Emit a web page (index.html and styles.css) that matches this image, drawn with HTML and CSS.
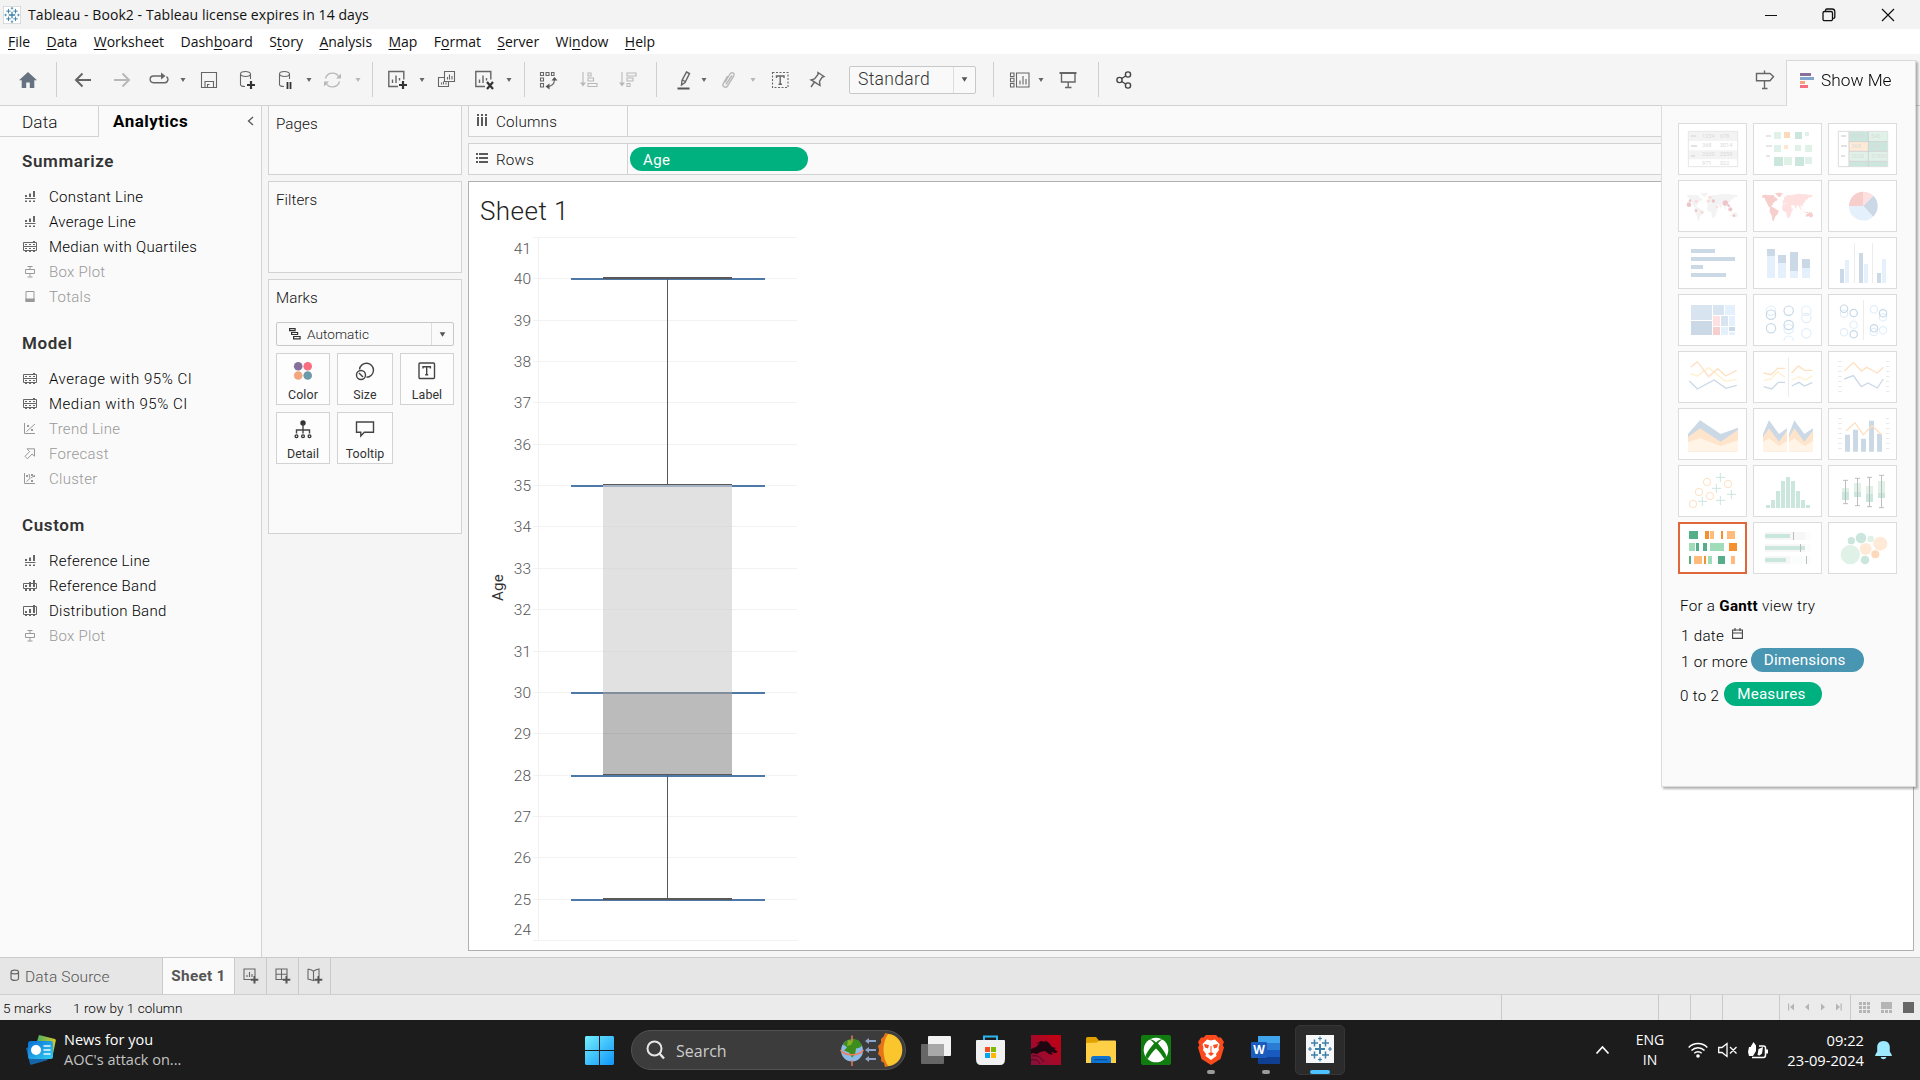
FILE: index.html
```html
<!DOCTYPE html>
<html lang="en">
<head>
<meta charset="utf-8">
<title>Tableau - Book2</title>
<link rel="stylesheet" href="styles.css">
</head>
<body>
<svg class="defs" width="0" height="0">
  <symbol id="caret" viewBox="0 0 8 6"><path d="M1.500 1h5L4 5z" fill="currentColor"/></symbol>
  <symbol id="s-line" viewBox="0 0 14 12"><path d="M2 4h2v2H2zM6 2.500h2v3.500H6zM10 0h2v6h-2zM2 7h10.500v1H2zM2 9.500h2v1.500H2zM6 9.500h2v1.500H6zM10 9.500h2v1.500h-2z" fill="currentColor"/></symbol>
  <symbol id="s-quart" viewBox="0 0 14 12"><path d="M.5 1.500h13v4H.5zM.5 5.500h13v4H.5z" fill="none" stroke="currentColor"/><path d="M2 3h2v1H2zM6 3h2v1H6zM10 3h2v1h-2zM2 7h2v1H2zM6 7h2v1H6zM10 7h2v1h-2zM10 0h2v2h-2zM2 9h2v2H2zM6 9h2v2H6zM10 9h2v2h-2z" fill="currentColor"/></symbol>
  <symbol id="s-band" viewBox="0 0 14 12"><path d="M.5 3.500h13v5H.5z" fill="none" stroke="currentColor"/><path d="M2 5h2v2H2zM6 2h2v5H6zM10 0h2v7h-2zM2 8.500h2v2.500H2zM6 8.500h2v2.500H6zM10 8.500h2v2.500h-2z" fill="currentColor"/></symbol>
  <symbol id="s-dist" viewBox="0 0 14 12"><path d="M.5 1.500h13v8H.5z" fill="none" stroke="currentColor"/><path d="M2 6h2v2H2zM6 4h2v4H6zM10 0h2v8h-2zM2 9h2v2H2zM6 9h2v2H6zM10 9h2v2h-2z" fill="currentColor"/></symbol>
  <symbol id="s-box" viewBox="0 0 14 12"><path d="M4.500.5h5M7 .5v3M2.500 3.500h9v4h-9zM7 7.500v3M4.500 11h5" fill="none" stroke="currentColor"/></symbol>
  <symbol id="s-total" viewBox="0 0 14 12"><path d="M3 .5h8v10H3z" fill="none" stroke="currentColor"/><path d="M2.500 7.500h9V11h-9z" fill="currentColor"/></symbol>
  <symbol id="s-trend" viewBox="0 0 14 12"><path d="M1.500 0v10.500H12M3.500 8.500L12 1" fill="none" stroke="currentColor"/><path d="M4 2h2v2H4zM8 6h2v2H8z" fill="currentColor"/></symbol>
  <symbol id="s-fore" viewBox="0 0 14 12"><path d="M4 .8h7.500v7.400L9 6 4.500 10.800 2 8.300 6.600 3.600z" fill="none" stroke="currentColor"/></symbol>
  <symbol id="s-clus" viewBox="0 0 14 12"><path d="M1.500 0v10.500H12M3.500 8.500L7 5.500 6 1M8 5l4-3" fill="none" stroke="currentColor"/><path d="M3 2h2v2H3zM8 1h2v2H8zM8 7h2v2H8zM10 3h2v1h-2z" fill="currentColor"/></symbol>
  <symbol id="tableau" viewBox="0 0 28 28"><g stroke="#3f80a8" fill="none"><path d="M14 9v10M9 14h10" stroke-width="2"/><path d="M8.500 4.500v7M5 8h7M19.500 4.500v7M16 8h7M8.500 16.500v7M5 20h7M19.500 16.500v7M16 20h7" stroke-width="1.500"/><path d="M14 1.500v4M12 3.500h4M14 22.500v4M12 24.500h4M4 12v4M2 14h4M24 12v4M22 14h4" stroke-width="1.200"/></g></symbol>
  <symbol id="map" viewBox="0 0 207 156"><path d="M27 47l8-3 14 2 10-1 6 3-3 6 7-2 5 8-8 4-7 7-1 5-4 1 3 6 5 4-3 1-9-6-4-5-5-10-4-6-1-6-8-3zM66 40l12-2 14 1-10 11-5 1-6-7zM51 84l9-2 8 5 9 6-4 10-6 6-5 13-4-1-2-15-6-10zM89 62l5-4-1-6 12-8 8 2 22-5 14 1 31 4-3 4-11 3-2 5-5 1-4 8-6 6 2 5-3 1-4-4-2 4 4 9-3 1-6-12-5-1-4 11-5-11-10 0 4 6-5 3-8-13-9-2-6 3zM90 73l14-1 7 3 4 10 6 2-6 9-1 9-6 9-5-1-4-17-9-2-3-9zM158 105l8-5 4-4 2 3 3-3 5 10-3 6-7-1-3-3-8 2zM150 89l7 6 9 2-2 2-10-3z"/></symbol>
</svg>

<header class="titlebar">
  <svg class="app-ico" width="18" height="18" viewBox="0 0 28 28"><rect width="28" height="28" fill="#fff" stroke="#c9c9c9" stroke-width="2"/><use href="#tableau"/></svg>
  <span class="title">Tableau - Book2 - Tableau license expires in 14 days</span>
  <div class="winbtns">
    <svg width="12" height="14" viewBox="0 0 12 14"><path d="M0 7.500h12" stroke="#111"/></svg>
    <svg width="14" height="14" viewBox="0 0 14 14"><path d="M3.500 3.500V2.200A1.500 1.500 0 0 1 4.800 1H10a2.800 2.800 0 0 1 2.800 2.800V9a1.500 1.500 0 0 1-1.500 1.500M1 5a1.500 1.500 0 0 1 1.500-1.500H9A1.500 1.500 0 0 1 10.500 5v6.200A1.500 1.500 0 0 1 9 12.700H2.500A1.500 1.500 0 0 1 1 11.200z" fill="none" stroke="#111" stroke-width="1.300"/></svg>
    <svg width="14" height="14" viewBox="0 0 14 14"><path d="M1 1l12 12M13 1L1 13" stroke="#111" stroke-width="1.200"/></svg>
  </div>
</header>

<nav class="menubar">
  <span><u>F</u>ile</span><span><u>D</u>ata</span><span><u>W</u>orksheet</span><span>Dash<u>b</u>oard</span><span>S<u>t</u>ory</span><span><u>A</u>nalysis</span><span><u>M</u>ap</span><span>F<u>o</u>rmat</span><span><u>S</u>erver</span><span>Wi<u>n</u>dow</span><span><u>H</u>elp</span>
</nav>

<div class="toolbar">
  <svg width="20" height="20" viewBox="0 0 20 20"><path d="M10 2l9 8.300h-2.700V18h-4.500v-5.500H8.200V18H3.700v-7.700H1z" fill="#66727f"/></svg>
  <i class="sep"></i>
  <svg width="20" height="20" viewBox="0 0 20 20"><path d="M18 10H3M9.500 3.500L3 10l6.500 6.500" class="k2"/></svg>
  <svg class="off" width="20" height="20" viewBox="0 0 20 20"><path d="M2 10h15M10.500 3.500L17 10l-6.500 6.500" class="k2"/></svg>
  <svg width="20" height="20" viewBox="0 0 20 20"><path d="M14 6H4.500a3.300 3.300 0 0 0 0 6.700h11.500a3.300 3.300 0 0 0 1.500-6" class="k15"/><path d="M12 2.500l4.500 3.500L12 9.500z" fill="#666"/></svg>
  <svg class="car" width="8" height="6"><use href="#caret"/></svg>
  <svg width="20" height="20" viewBox="0 0 20 20"><path d="M2.500 2.500h15v15h-15zM6 17.500v-6h8.500v6M8.500 17.500v-3h2" class="k"/></svg>
  <svg width="20" height="20" viewBox="0 0 20 20"><ellipse cx="7.500" cy="4" rx="5" ry="2.500" class="k"/><path d="M2.500 4v10.500c0 1 2 2 4.500 2M12.500 4v5" class="k"/><path d="M13 11v8M9 15h8" stroke="#333" stroke-width="2.200"/></svg>
  <svg width="20" height="20" viewBox="0 0 20 20"><ellipse cx="9.500" cy="4" rx="5" ry="2.500" class="k"/><path d="M4.500 4v10.500c0 1 2 2 4.500 2M14.500 4v5" class="k"/><path d="M12.500 12v7M15.500 12v7" stroke="#333" stroke-width="1.800"/></svg>
  <svg class="car" width="8" height="6"><use href="#caret"/></svg>
  <svg class="off" width="20" height="20" viewBox="0 0 20 20"><path d="M2.500 8.500a7.300 7.300 0 0 1 13.500-1.500M16.500 11.500A7.300 7.300 0 0 1 3 13" class="k15"/><path d="M18 3.500v5h-5zM1 16.500v-5h5z" fill="#b8b8b8"/></svg>
  <svg class="car offc" width="8" height="6"><use href="#caret"/></svg>
  <i class="sep"></i>
  <svg width="20" height="20" viewBox="0 0 20 20"><path d="M10 16.500H.8V1.500h15v8M4.500 13V9.500M8 13V5.500M11.500 10.500V8" class="k15"/><path d="M15 11v8M11 15h8" stroke="#333" stroke-width="2.200"/></svg>
  <svg class="car" width="8" height="6"><use href="#caret"/></svg>
  <svg width="20" height="20" viewBox="0 0 20 20"><path d="M7.500 1.500h10v10h-10zM7 7.500H1.500v9h10v-4.500M10.500 9.500V7M12.500 9.500v-5M15 9.500V6M4.500 14.500v-2M6.500 14.500v-3M9 14.500v-2" class="k"/></svg>
  <svg width="20" height="20" viewBox="0 0 20 20"><path d="M10 16.500H.8V1.500h15v8M4.500 13V9.500M8 13V5.500M11.500 10.500V8" class="k15"/><path d="M12 12l6 7M18 12l-6 7" stroke="#333" stroke-width="2.200"/></svg>
  <svg class="car" width="8" height="6"><use href="#caret"/></svg>
  <i class="sep"></i>
  <svg width="20" height="20" viewBox="0 0 20 20"><path d="M1.500 2.500h3v3h-3zM7 2.500h3v3H7zM12.500 2.500h2.500v3h-2.500zM1.500 8h3v3h-3zM1.500 13.500h3V17h-3zM8 16.500c5 0 7.500-2.500 7.500-7.500" class="k"/><path d="M12.500 10.500l3-3.500 3 3.500zM10.500 13.500l-4 3 4 3z" fill="#555"/></svg>
  <svg class="off" width="20" height="20" viewBox="0 0 20 20"><path d="M4 2v12M9 3h3v3H9zM9 8h5.500v3H9zM9 13.500h9v3H9z" class="k"/><path d="M1 12.500h6l-3 4z" fill="#b8b8b8"/></svg>
  <svg class="off" width="20" height="20" viewBox="0 0 20 20"><path d="M4 2v12M9 3h9v3H9zM9 8h6v3H9zM9 13.500h3v3H9z" class="k"/><path d="M1 12.500h6l-3 4z" fill="#b8b8b8"/></svg>
  <i class="sep"></i>
  <svg width="20" height="20" viewBox="0 0 20 20"><path d="M12.500 2l3 1.500-4.500 9-3.500 2.500.5-4.500zM8.500 10l2.500 1.500" class="k15"/><path d="M3.500 17.500h12v2h-12z" fill="#555"/></svg>
  <svg class="car" width="8" height="6"><use href="#caret"/></svg>
  <svg class="off" width="20" height="20" viewBox="0 0 20 20"><path d="M6 12.500l5-8.500c1.500-2.500 5-.8 3.800 1.800L8.500 16c-1.800 2.500-5.500.8-4.300-2.200L8.500 6M7 14.500l6-9" class="k15"/></svg>
  <svg class="car offc" width="8" height="6"><use href="#caret"/></svg>
  <svg width="20" height="20" viewBox="0 0 20 20"><path d="M1.500 2.500h15.500v15H1.500z" class="k" stroke-dasharray="2 1.500"/><path d="M5.500 8V6h7.500v2M9.200 6v8M7.500 14.200h3.500" class="k15"/></svg>
  <svg width="20" height="20" viewBox="0 0 20 20"><path d="M10 2.500l6 4-2 .8-2.500 4.200.5 4-3-1.800-3-2-3-1.800 3.500-1L10 4.500zM6.500 12L3 17" class="k15"/></svg>
  <div class="fit"><span>Standard</span><b><svg width="9" height="7"><use href="#caret"/></svg></b></div>
  <i class="sep"></i>
  <svg width="22" height="20" viewBox="0 0 22 20"><path d="M2.500 3h3.500v3.500H2.500zM2.500 8.300h3.500v3.500H2.500zM2.500 13.500h3.500V17H2.500zM8.500 3h12.500v14H8.500zM12 14.500v-4M15 14.500V6M18 14.500V9" class="k"/></svg>
  <svg class="car" width="8" height="6"><use href="#caret"/></svg>
  <svg width="20" height="20" viewBox="0 0 20 20"><path d="M1.500 3h17" class="k2"/><path d="M3.500 3v9h13.500V3M10.200 12v5.500M7 17.500h6.500" class="k15"/></svg>
  <i class="sep"></i>
  <svg width="20" height="20" viewBox="0 0 20 20"><g class="k15 d"><circle cx="4.500" cy="10" r="2.600"/><circle cx="13" cy="4.500" r="2.600"/><circle cx="13" cy="15.500" r="2.600"/><path d="M6.700 8.500L10.700 6M6.700 11.500l4 2.500"/></g></svg>
  <svg width="20" height="20" viewBox="0 0 20 20"><path d="M1.500 3.500H15l3.500 3-3.500 4.300H1.500zM9.500.5v3M9.500 11v7.500M7 18.500h5.500" class="k15"/></svg>
</div>

<main class="work">
  <aside class="side">
    <div class="tabs"><span class="tab-data">Data</span><span class="tab-an">Analytics</span><svg width="7" height="10" viewBox="0 0 7 10"><path d="M6 1L1.500 5 6 9" fill="none" stroke="#555" stroke-width="1.300"/></svg></div>
    <h3>Summarize</h3>
    <ul>
      <li><svg width="14" height="12"><use href="#s-line"/></svg>Constant Line</li>
      <li><svg width="14" height="12"><use href="#s-line"/></svg>Average Line</li>
      <li><svg width="14" height="12"><use href="#s-quart"/></svg>Median with Quartiles</li>
      <li class="dis"><svg width="14" height="12"><use href="#s-box"/></svg>Box Plot</li>
      <li class="dis"><svg width="14" height="12"><use href="#s-total"/></svg>Totals</li>
    </ul>
    <h3>Model</h3>
    <ul>
      <li class="ci"><svg width="14" height="12"><use href="#s-quart"/></svg>Average with 95% CI</li>
      <li class="ci"><svg width="14" height="12"><use href="#s-quart"/></svg>Median with 95% CI</li>
      <li class="dis"><svg width="14" height="12"><use href="#s-trend"/></svg>Trend Line</li>
      <li class="dis"><svg width="14" height="12"><use href="#s-fore"/></svg>Forecast</li>
      <li class="dis"><svg width="14" height="12"><use href="#s-clus"/></svg>Cluster</li>
    </ul>
    <h3>Custom</h3>
    <ul>
      <li><svg width="14" height="12"><use href="#s-line"/></svg>Reference Line</li>
      <li><svg width="14" height="12"><use href="#s-band"/></svg>Reference Band</li>
      <li><svg width="14" height="12"><use href="#s-dist"/></svg>Distribution Band</li>
      <li class="dis"><svg width="14" height="12"><use href="#s-box"/></svg>Box Plot</li>
    </ul>
  </aside>

  <section class="cards">
    <div class="card pages">Pages</div>
    <div class="card filters">Filters</div>
    <div class="card marks">Marks
      <div class="mtype"><svg width="12" height="12" viewBox="0 0 12 12"><path d="M.6.700h5.500v2H.6zM2.600 4.500h6v2h-6zM4.600 8.500h6.500v2.300H4.600z" fill="none" stroke="#333" stroke-width="1.200"/></svg><span>Automatic</span><b><svg width="9" height="7"><use href="#caret"/></svg></b></div>
      <div class="mgrid">
        <div><svg width="20" height="20" viewBox="0 0 20 20"><circle cx="5.200" cy="5.200" r="4.300" fill="#86709a"/><circle cx="14.700" cy="5.200" r="4.300" fill="#f96d80"/><circle cx="5.200" cy="14.500" r="4.300" fill="#f3a67e"/><circle cx="14.700" cy="14.500" r="4.300" fill="#6d9aa8"/></svg>Color</div>
        <div><svg width="20" height="20" viewBox="0 0 20 20"><path d="M4.500 8.500a7 7 0 1 1 7 7.700" class="k15 d"/><circle cx="6" cy="14" r="4.500" class="k15 d"/><path d="M4 12l4 4" class="k15 d"/></svg>Size</div>
        <div><svg width="20" height="20" viewBox="0 0 20 20"><rect x="2" y="2" width="15.500" height="15.500" rx="1" class="k15 d"/><path d="M6 7.500V5.700h7.400v1.800M9.700 5.700v8M8.200 13.700h3" class="k15 d"/></svg>Label</div>
        <div><svg width="20" height="20" viewBox="0 0 20 20"><circle cx="10" cy="3" r="2.700" fill="#333"/><path d="M10 3.500v10M3.500 13.500V10h13v3.500" class="k15 d"/><g fill="none" stroke="#333" stroke-width="1.300"><circle cx="3.500" cy="16.200" r="1.400"/><circle cx="10" cy="16.200" r="1.400"/><circle cx="16.500" cy="16.200" r="1.400"/></g></svg>Detail</div>
        <div><svg width="20" height="20" viewBox="0 0 20 20"><path d="M1.500 2H18.500v10.200H9.300L5.800 16v-3.800H1.500z" class="k15 d"/></svg>Tooltip</div>
      </div>
    </div>
  </section>

  <section class="canvas">
    <div class="shelf"><span class="sh-name"><svg width="12" height="12" viewBox="0 0 12 12"><path d="M1 0h2v2H1zM5 0h2v2H5zM9 0h2v2H9zM1 3h2v9H1zM5 3h2v9H5zM9 3h2v9H9z" fill="#5a5a5a"/></svg>Columns</span></div>
    <div class="shelf"><span class="sh-name"><svg width="12" height="12" viewBox="0 0 12 12"><path d="M0 1h2v2H0zM0 5h2v2H0zM0 9h2v2H0zM3 1h9v2H3zM3 5h9v2H3zM3 9h9v2H3z" fill="#5a5a5a"/></svg>Rows</span><span class="pill age">Age</span></div>
    <div class="view">
      <svg width="1444" height="768" viewBox="469 182 1444 768">
        <text x="480" y="220" class="vtitle">Sheet 1</text>
        <path class="gridl" d="M533 237.500H797M533 278.500H797M533 320.500H797M533 361.500H797M533 402.500H797M533 444.500H797M533 485.500H797M533 526.500H797M533 568.500H797M533 609.500H797M533 651.500H797M533 692.500H797M533 733.500H797M533 775.500H797M533 816.500H797M533 857.500H797M533 899.500H797M533 940.500H798M538.500 237V941"/>
        <g class="ax" text-anchor="end">
          <text x="531" y="254">41</text><text x="531" y="284">40</text><text x="531" y="326">39</text><text x="531" y="367">38</text><text x="531" y="408">37</text><text x="531" y="450">36</text><text x="531" y="491">35</text><text x="531" y="532">34</text><text x="531" y="574">33</text><text x="531" y="615">32</text><text x="531" y="657">31</text><text x="531" y="698">30</text><text x="531" y="739">29</text><text x="531" y="781">28</text><text x="531" y="822">27</text><text x="531" y="863">26</text><text x="531" y="905">25</text><text x="531" y="935">24</text>
        </g>
        <text transform="translate(502.500 601) rotate(-90)" class="axt">Age</text>
        <g shape-rendering="crispEdges">
          <rect x="603" y="485" width="129" height="207" fill="#e1e1e1"/>
          <rect x="603" y="692" width="129" height="83" fill="#bbb"/>
          <path d="M603 526.500H732M603 568.500H732M603 609.500H732M603 651.500H732" stroke="#dcdcdc"/><path d="M603 733.500H732" stroke="#b2b2b2"/>
          <path d="M571 279H765M571 486H603M732 486H765M571 693H603M732 693H765M571 776H765M571 900H765" stroke="#4e79a7" stroke-width="2"/>
          <path d="M603 486H732" stroke="#a6b3c4" stroke-width="2"/><path d="M603 693H732" stroke="#828d9d" stroke-width="2"/>
          <path d="M603 278H732M603 899H732" stroke="#595959" stroke-width="2"/>
          <path d="M603 484.500H732M603 774.500H732M667.500 279V484M667.500 775V898" stroke="#595959"/>
        </g>
      </svg>
    </div>
  </section>
</main>

<section class="showme">
  <div class="sm-tab"><svg width="14" height="16" viewBox="0 0 14 16"><path d="M0 1h11v3H0z" fill="#86709a"/><path d="M0 5h14v3H0z" fill="#82a5cc"/><path d="M0 9h5v3H0z" fill="#f3a67e"/><path d="M0 13h8v3H0z" fill="#f96d80"/></svg>Show Me</div>
  <div class="sm-body">
    <div class="thumbs">
      <svg viewBox="0 0 207 156"><path d="M31 25h148v106H31z" fill="#fff" stroke="#e6e6e6" stroke-width="3"/><path d="M33 27h144v27H33zM33 82h144v27H33z" fill="#f3f3f3"/><path d="M39 36h15v6H39zM39 66h18v6H39zM39 96h12v6H39z" fill="#e2e2e2"/><g class="tt"><text x="72" y="46">1234</text><text x="125" y="46">678</text><text x="72" y="73">368</text><text x="125" y="73">3014</text><text x="72" y="100">2620</text><text x="125" y="100">2559</text><text x="72" y="125">971</text><text x="125" y="125">322</text></g></svg>
      <svg viewBox="0 0 207 156"><path d="M39 36h15v6H39zM39 66h18v6H39zM39 96h12v6H39z" fill="#e6e6e6"/><path d="M63 27h21v21H63zM156 27h12v12h-12zM63 66h21v21H63zM126 66h18v18h-18zM156 66h21v21h-21zM93 102h24v24H93zM156 102h21v21h-21z" fill="#e0f2e8"/><path d="M126 27h21v21h-21zM63 102h27v27H63zM126 102h27v27h-27z" fill="#cbe6dc"/><path d="M93 27h18v18H93z" fill="#fcd9ba"/><path d="M93 66h12v12H93z" fill="#fee6cf"/></svg>
      <svg viewBox="0 0 207 156"><path d="M31 25h148v106H31z" fill="#fff" stroke="#dcdcdc" stroke-width="3"/><path d="M39 36h15v6H39zM39 66h18v6H39zM39 96h12v6H39z" fill="#e2e2e2"/><path d="M64 27h57v28H64zM122 57h56v27h-56zM64 117h57v13H64zM122 117h56v13h-56z" fill="#cbe6dc"/><path d="M122 27h56v28h-56zM64 86h57v28H64zM122 86h56v28h-56z" fill="#e0f2e8"/><path d="M64 57h57v27H64z" fill="#feead6"/><path d="M63 56h115M63 85h115M63 115h115M121 26v105M63 26v105" stroke="#d0d0d0" stroke-width="3"/><g class="tt"><text x="70" y="46">1234</text><text x="129" y="46">546</text><text x="70" y="76">368</text><text x="129" y="76">340</text><text x="70" y="106">2620</text><text x="129" y="106">51890</text></g></svg>

      <svg viewBox="0 0 207 156"><use href="#map" fill="#f3f3f3"/><g fill="#eec3c9"><circle cx="33" cy="74" r="7"/><circle cx="142" cy="69" r="8"/><circle cx="157" cy="88" r="6"/><circle cx="106" cy="63" r="5"/><circle cx="54" cy="92" r="4"/><circle cx="168" cy="107" r="4"/><circle cx="152" cy="77" r="4"/><circle cx="36" cy="62" r="4"/></g><g fill="#fbdcda"><circle cx="55" cy="64" r="5"/><circle cx="72" cy="97" r="5"/><circle cx="96" cy="52" r="5"/><circle cx="91" cy="63" r="5"/><circle cx="117" cy="81" r="4"/></g></svg>
      <svg viewBox="0 0 207 156"><svg width="207" height="156"><use href="#map" fill="#ffe0e0"/></svg><svg width="85" height="156" viewBox="0 0 85 156"><use href="#map" width="207" height="156" fill="#f6cfcd"/></svg><svg x="158" y="96" width="40" height="40" viewBox="158 96 40 40"><use href="#map" width="207" height="156" fill="#f6cfcd"/></svg></svg>
      <svg viewBox="0 0 207 156"><path d="M106 78V35a43 43 0 0 1 30 12z" fill="#ffe0e0"/><path d="M106 78L136 47a43 43 0 0 1-1 63z" fill="#cbd8e6"/><path d="M106 78l29 32A43 43 0 0 1 63 78z" fill="#e4f0fb"/><path d="M106 78H63a43 43 0 0 1 43-43z" fill="#f6cfcd"/></svg>

      <svg viewBox="0 0 207 156"><path d="M39 36h72v12H39zM39 60h132v12H39zM39 84h36v12H39zM39 108h105v12H39z" fill="#cbd8e6"/></svg>
      <svg viewBox="0 0 207 156"><path d="M42 36h24v87H42zM75 54h24v69H75zM111 45h24v78h-24zM147 66h24v57h-24z" fill="#e4f0fb"/><path d="M42 36h24v21H42zM75 54h24v24H75zM111 45h24v57h-24zM147 66h24v27h-24z" fill="#cbd8e6"/></svg>
      <svg viewBox="0 0 207 156"><path d="M79.500 18v120M133.500 18v120" stroke="#ececec" stroke-width="3"/><path d="M36 96h12v42H36zM93 48h12v90H93zM147 108h12v30h-12z" fill="#cbd8e6"/><path d="M51 69h12v69H51zM108 81h12v57h-12zM162 66h12v72h-12z" fill="#e4f0fb"/></svg>

      <svg viewBox="0 0 207 156"><path d="M39 33h63v45H39zM105 33h33v30h-33zM129 66h21v30h-21z" fill="#d8e5f1"/><path d="M39 81h63v42H39zM153 99h18v12h-18z" fill="#cbd8e6"/><path d="M141 33h30v30h-30zM153 66h18v30h-18zM129 99h21v24h-21zM153 114h18v9h-18z" fill="#e4f0fb"/><path d="M105 66h21v30h-21z" fill="#ffe0e0"/><path d="M105 99h21v24h-21z" fill="#f6cfcd"/></svg>
      <svg viewBox="0 0 207 156"><g fill="none" stroke="#e0eefa" stroke-width="3.500"><circle cx="54" cy="50" r="14"/><circle cx="160" cy="50" r="14"/><circle cx="160" cy="72" r="14"/><circle cx="107" cy="105" r="14"/><circle cx="160" cy="118" r="14"/><path d="M93 140a14 14 0 0 1 28 0"/></g><g fill="none" stroke="#c6d8e7" stroke-width="3.500"><circle cx="54" cy="62" r="14"/><circle cx="107" cy="50" r="14"/><circle cx="54" cy="103" r="14"/><circle cx="107" cy="93" r="14"/></g></svg>
      <svg viewBox="0 0 207 156"><path d="M106.500 18v120" stroke="#ececec" stroke-width="3"/><g fill="none" stroke="#e0eefa" stroke-width="3.500"><circle cx="48" cy="59" r="11"/><circle cx="77" cy="92" r="11"/><circle cx="48" cy="115" r="11"/><circle cx="138" cy="46" r="11"/><circle cx="165" cy="70" r="11"/><circle cx="165" cy="109" r="11"/><circle cx="137" cy="114" r="11"/></g><g fill="none" stroke="#c6d8e7" stroke-width="3.500"><circle cx="48" cy="44" r="11"/><circle cx="77" cy="57" r="11"/><circle cx="77" cy="121" r="11"/><circle cx="165" cy="58" r="11"/><circle cx="138" cy="103" r="11"/></g></svg>

      <svg viewBox="0 0 207 156"><g class="ln"><path stroke="#fff0cf" d="M36 68l22 7 34-25 50 41 34-6"/><path stroke="#fee0c2" d="M38 49l20-17 34 45 27-24 24 22 33-17"/><path stroke="#cbd8e6" d="M34 90l24 24 50-27 36 25 32-9"/></g></svg>
      <svg viewBox="0 0 207 156"><path d="M106.500 18v120" stroke="#ececec" stroke-width="3"/><g class="ln"><path stroke="#fff0cf" d="M32 88l22-5 20-21 22 17M116 87l22-10 20 10 20-13"/><path stroke="#fee0c2" d="M32 66l22 5 20-19h22M116 66l20-21 18 13h24"/><path stroke="#cbd8e6" d="M32 107l24 7 20-20h20M116 105l22-11 16 11 24-10"/></g></svg>
      <svg viewBox="0 0 207 156"><path d="M36 30v100M179 30v100" stroke="#e9e9e9" stroke-width="10" stroke-dasharray="3 12"/><g class="ln"><path stroke="#fee0c2" d="M49 60l27-26 24 26 16-11 32 17 18-17"/><path stroke="#cbd8e6" d="M49 84l27-10 24 33 20-11 28 15 18-27"/></g></svg>

      <svg viewBox="0 0 207 156"><path d="M30 78l36-41 62 41 52-19v72H30z" fill="#cbd8e6"/><path d="M30 87l36-26 62 40 52-36v66H30z" fill="#fee4cb"/><path d="M30 102l36-11 62 23 52-17v34H30z" fill="#fff4e6"/></svg>
      <svg viewBox="0 0 207 156"><path d="M30 78l18-41 30 41 24-17v70H30zM108 78l16-41 30 41 26-17v70h-72z" fill="#cbd8e6"/><path d="M30 87l18-26 30 40 24-34v64H30zM108 87l16-26 30 40 26-34v64h-72z" fill="#fee4cb"/><path d="M30 102l18-11 30 23 24-15v32H30zM108 102l16-11 30 23 26-15v32h-72z" fill="#fff4e6"/></svg>
      <svg viewBox="0 0 207 156"><path d="M36 30v100M179 30v100" stroke="#e9e9e9" stroke-width="10" stroke-dasharray="3 12"/><path d="M51 80h15v51H51zM75 65h15v66H75zM99 92h15v39H99zM123 38h15v93h-15zM147 77h15v54h-15z" fill="#cbd8e6"/><path class="ln" stroke="#fee0c2" d="M54 69l27-25 25 36 26-27 29 27"/></svg>

      <svg viewBox="0 0 207 156"><g fill="none" stroke="#fee0c2" stroke-width="3"><circle cx="87" cy="51" r="11"/><circle cx="150" cy="57" r="11"/><circle cx="63" cy="81" r="11"/><circle cx="96" cy="93" r="11"/><circle cx="45" cy="117" r="11"/></g><path d="M127 24v27M114 37h27M115 57v27M102 70h27M160 75v27M147 88h27M127 93v27M114 106h27M73 96v27M60 109h27" stroke="#cbe6dc" stroke-width="3"/></svg>
      <svg viewBox="0 0 207 156"><path d="M39 120h12v9H39zM54 105h12v24H54zM69 78h12v51H69zM84 48h12v81H84zM99 36h12v93H99zM114 48h12v81h-12zM129 78h12v51h-12zM144 105h12v24h-12zM159 120h12v9h-12z" fill="#cbe6dc"/></svg>
      <svg viewBox="0 0 207 156"><path d="M42 69h21v36H42zM78 54h21v42H78zM114 63h21v48h-21zM150 48h21v51h-21z" fill="#e0f2e8"/><path d="M42 81h21v24H42zM78 81h21v15H78zM114 87h21v24h-21zM150 84h21v15h-21z" fill="#cbe6dc"/><path d="M45 46h15M52.500 46v70M45 116h15M81 40h15M88.500 40v82M81 122h15M117 37h15M124.500 37v88M117 125h15M153 31h15M160.500 31v97M153 128h15" stroke="#bdbdbd" stroke-width="3"/></svg>

      <svg class="sel" viewBox="0 0 207 156"><path d="M33 27h27v24H33zM54 63h9v24h-9zM75 63h12v24H75zM33 102h6v24h-6zM120 102h21v24h-21z" fill="#56ad8a"/><path d="M33 63h18v24H33zM96 63h42v24H96zM90 102h12v24H90z" fill="#9fdcb8"/><path d="M81 27h12v24H81zM129 27h6v24h-6zM153 63h24v24h-24zM78 102h6v24h-6z" fill="#f68f2e"/><path d="M96 27h12v24H96zM147 27h24v24h-24zM48 102h24v24H48zM159 102h12v24h-12z" fill="#febb7c"/></svg>
      <svg viewBox="0 0 207 156"><path d="M36 30h120v24H36zM36 66h120v24H36zM36 102h75v24H36z" fill="#f7f7f7"/><path d="M156 30h18v24h-18zM156 66h18v24h-18zM111 102h63v24h-63z" fill="#fbfcfc"/><path d="M36 36h75v12H36zM36 72h120v12H36zM36 108h63v12H36z" fill="#cbe6dc"/><path d="M121.500 30v24M142.500 66v24M160.500 102v24" stroke="#bdbdbd" stroke-width="3"/></svg>
      <svg viewBox="0 0 207 156"><g fill="#e0f2e8"><circle cx="67" cy="98" r="29"/><circle cx="128" cy="51" r="10"/></g><g fill="#cbe6dc"><circle cx="99" cy="48" r="16"/><circle cx="70" cy="56" r="11"/><circle cx="111" cy="114" r="13"/></g><g fill="#feead6"><circle cx="113" cy="81" r="18"/><circle cx="157" cy="65" r="21"/></g><circle cx="142" cy="97" r="12" fill="#fcd9ba"/></svg>
    </div>
    <p class="sm-for">For a <b>Gantt</b> view try</p>
    <p class="sm-date">1 date <svg width="11" height="11" viewBox="0 0 11 11"><path d="M.6 2h9.800v8.400H.6zM.6 5h9.800M3 0v3M8 0v3" fill="none" stroke="#444" stroke-width="1.100"/></svg></p>
    <p class="sm-dim"><span>1 or more</span><span class="pill dim">Dimensions</span></p>
    <p class="sm-mea"><span>0 to 2</span><span class="pill mea">Measures</span></p>
  </div>
</section>

<div class="sheets">
  <span class="ds"><svg width="10" height="14" viewBox="0 0 10 14"><path d="M1 3c0-2.500 7.500-2.500 7.500 0v6.500c0 2.500-7.500 2.500-7.500 0zM1 3.300c0 2.200 7.500 2.200 7.500 0" fill="none" stroke="#666" stroke-width="1.200"/></svg>Data Source</span>
  <span class="cur">Sheet 1</span>
  <span class="add"><svg width="16" height="16" viewBox="0 0 16 16"><path d="M8 11.500H1V1h11v7M4 9V7M6.500 9V4M9 9V6" class="k"/><path d="M11.500 8v7.500M7.800 11.700h7.500" stroke="#555" stroke-width="2"/></svg></span>
  <span class="add"><svg width="16" height="16" viewBox="0 0 16 16"><path d="M8 11.500H1V1h11v7M1 6.300h11M6.500 1v10.500" class="k"/><path d="M11.500 8v7.500M7.800 11.700h7.500" stroke="#555" stroke-width="2"/></svg></span>
  <span class="add"><svg width="16" height="16" viewBox="0 0 16 16"><path d="M1 1l3.500 1L6.500 3.300 8.500 2 12 1v7M1 1v10l5.500 1.500V3.300M6.500 12.500L8 12" class="k"/><path d="M11.500 8v7.500M7.800 11.700h7.500" stroke="#555" stroke-width="2"/></svg></span>
</div>

<div class="status">
  <span class="st-a">5 marks</span><span class="st-b">1 row by 1 column</span>
  <i class="c1"></i><i class="c2"></i><i class="c2"></i><i class="c3"></i>
  <span class="nav"><svg width="54" height="8" viewBox="0 0 54 8"><path d="M0 .5h1.200v7H0zM6 .5v7L2 4zM21 .5v7L17 4zM33 .5v7L37 4zM48 .5v7L52 4zM52.500.5h1.200v7h-1.200z" fill="#b5b5b5"/></svg></span>
  <span class="modes">
    <svg width="11" height="11" viewBox="0 0 11 11"><path d="M0 0h3v3H0zM4 0h3v3H4zM8 0h3v3H8zM0 4h3v3H0zM4 4h3v3H4zM8 4h3v3H8zM0 8h3v3H0zM4 8h3v3H4zM8 8h3v3H8z" fill="#b5b5b5"/></svg>
    <svg width="11" height="11" viewBox="0 0 11 11"><path d="M0 0h11v7H0zM0 8h3v3H0zM4 8h3v3H4zM8 8h3v3H8z" fill="#b5b5b5"/></svg>
    <svg width="11" height="11" viewBox="0 0 11 11"><path d="M0 0h11v11H0z" fill="#666"/></svg>
  </span>
</div>

<footer class="taskbar">
  <div class="news">
    <svg width="30" height="32" viewBox="0 0 30 32"><defs><linearGradient id="ng" x1="0" y1="0" x2="1" y2="1"><stop offset="0" stop-color="#0a6fd6"/><stop offset="1" stop-color="#33cdf0"/></linearGradient><linearGradient id="gg" x1="0" y1="0" x2="1" y2="0"><stop offset="0" stop-color="#3fae6a"/><stop offset="1" stop-color="#d6c828"/></linearGradient></defs><path d="M13 1l16 4q1 .5.800 1.500L27 20 9 14z" fill="url(#gg)"/><path d="M0 14l4 16q.5 1 1.500.800L22 26 6 12z" fill="#1765a8"/><rect x="2" y="7" width="25" height="18" rx="2.500" fill="url(#ng)"/><circle cx="10" cy="16" r="5" fill="#fff"/><path d="M17.500 12h7M17.500 16h7M17.500 20h7" stroke="#e8faff" stroke-width="1.600"/></svg>
    <div><div class="n1">News for you</div><div class="n2">AOC's attack on...</div></div>
  </div>
  <svg width="29" height="29" viewBox="0 0 29 29"><defs><linearGradient id="wg" x1="0" y1="0" x2="1" y2="1"><stop offset="0" stop-color="#72efff"/><stop offset="1" stop-color="#0f95f8"/></linearGradient></defs><path d="M1 0h13v14H0V1zM15 0h13l1 1v13H15zM0 15h14v14H1l-1-1zM15 15h14v13l-1 1H15z" fill="url(#wg)"/></svg>
  <div class="search">
    <svg width="20" height="20" viewBox="0 0 20 20"><circle cx="8.500" cy="8.500" r="7" fill="none" stroke="#e6e6e6" stroke-width="2"/><path d="M13.500 13.500l4.500 5" stroke="#e6e6e6" stroke-width="2.400"/></svg>
    <span>Search</span>
    <svg width="64" height="36" viewBox="0 0 64 36"><circle cx="13" cy="18.500" r="11" fill="#8dbbe8"/><path d="M4 13c2-4 6-6 10-6.500l6 2 3 5-2 2-4 1-1 6-3 3-3-5-5-2 3-3-2-2z" fill="#3c8d1c"/><path d="M9 8l5 1-2 4-4 1z" fill="#7fb525"/><path d="M1.500 18c4 6 18 6.500 23 0" fill="none" stroke="#ef7c5c" stroke-width="1.400"/><path d="M13 3.500v6M13 28v6" stroke="#ef7c5c" stroke-width="1.400"/><g stroke="#8fa3c6" stroke-width="1.800"><path d="M28 9h9M28 18h9M28 27h9"/></g><path d="M30 6l-4 3 4 3zM30 15l-4 3 4 3zM30 24l-4 3 4 3z" fill="#8fa3c6"/><path d="M46 1l4.500 1v32L46 35l-1-4-3-2v-4l-3-3 1-4-1-4 3-3v-4l3-3z" fill="#e57418"/><path d="M49 2a14.300 16 0 0 1 0 32c-6-9-6-23 0-32z" fill="#fbc52d"/></svg>
  </div>
  <svg width="30" height="28" viewBox="0 0 30 28"><rect x="7" y="0" width="23" height="20" rx="1" fill="#f2f2f2"/><rect x="0" y="8" width="23" height="20" rx="1" fill="#666"/><path d="M7 8h16v12H7z" fill="#a8a8a8"/></svg>
  <svg width="29" height="30" viewBox="0 0 29 30"><path d="M8 7V1.500h13V7" fill="none" stroke="#2cb5f0" stroke-width="2"/><path d="M0 6q0-1 1-1h27q1 0 1 1v18q0 6-5 6H5q-5 0-5-6z" fill="#f1f1f1"/><path d="M8 5V2M21 5V2" stroke="#2cb5f0" stroke-width="2"/><path d="M9 12h5v5H9z" fill="#f25022"/><path d="M15 12h5v5h-5z" fill="#7fba00"/><path d="M9 18h5v5H9z" fill="#00a4ef"/><path d="M15 18h5v5h-5z" fill="#ffb900"/></svg>
  <svg width="30" height="30" viewBox="0 0 30 30"><defs><linearGradient id="rg" x1="1" y1="0" x2="0" y2="1"><stop offset="0" stop-color="#c8000f"/><stop offset="1" stop-color="#86103e"/></linearGradient></defs><path d="M0 0h30v30H0z" fill="url(#rg)"/><path d="M0 14l5-2 4-4-4 1 5-3 5 1-1-2 4 3 3 4 4 1-2 1 4 3-3 1-4-1 2 3-4-1-4-3-5 1-3 2-4-1-2 1z" fill="#1d0710"/><path d="M1 21c5-1 8 0 12 6M0 25c4-1 7 0 9 4" fill="none" stroke="#4a0b24"/></svg>
  <svg width="30" height="26" viewBox="0 0 30 26"><path d="M0 1.500Q0 0 1.500 0H10l3 3.500V7H0z" fill="#e0a100"/><path d="M0 6l11-.5 2.500-2H29q1 0 1 1V26H0z" fill="#ffcf45"/><path d="M5 26v-4.500Q5 19 7.500 19h15q2.500 0 2.500 2.500V26z" fill="#0f74d1"/><path d="M8.500 22.700h13" stroke="#0a4d92" stroke-width="1.200"/></svg>
  <svg width="30" height="30" viewBox="0 0 30 30"><rect width="30" height="30" rx="2" fill="#107c10"/><circle cx="15" cy="15" r="12.300" fill="#fff"/><path d="M7 4.500c3-1 6 1 8 3 2-2 5-4 8-3-2.500-.3-4.500 2-6 4 4 4.500 8 10 8.500 13-2 3-2 2.500-2.500 2C21 20 18 16.500 15 13.500 12 16.500 9 20 7 23.500c-.5.500-.8.500-2.500-2C5 18.500 9 13 13 8.500 11.500 6.500 9.500 4.200 7 4.500z" fill="#107c10"/></svg>
  <div class="app"><svg width="26" height="30" viewBox="0 0 26 30"><path d="M8 0h10l2.500 2.500H23L26 7l-1.300 3L26 12.500 22.500 24 13 30 3.500 24 0 12.500 1.300 10 0 7l3-4.500h2.500z" fill="#fb4a1d"/><path d="M13 5.500l4-1 4.500 4.500-1 4 .5 2-3 4 .5 2L13 25l-5.500-4 .5-2-3-4 .5-2-1-4L9 4.500z" fill="#fff"/><path d="M6 9l5 1-1 3.500-3-1zM20 9l-5 1 1 3.500 3-1zM10 18.500l3-1.500 3 1.500-3 2.500z" fill="#fb4a1d"/><path d="M13 11v6" stroke="#fb4a1d"/></svg><em></em></div>
  <div class="app word"><svg width="29" height="28" viewBox="0 0 29 28"><path d="M7 0h22v7H7z" fill="#41a5ee"/><path d="M7 7h22v7H7z" fill="#2b7cd3"/><path d="M7 14h22v7H7z" fill="#185abd"/><path d="M7 21h22v7H7z" fill="#103f91"/><rect y="6" width="16" height="16" rx="1" fill="#1b5cbf"/><text x="8" y="18" text-anchor="middle" class="w">W</text></svg><em></em></div>
  <div class="app on"><svg width="28" height="28" viewBox="0 0 28 28"><path d="M0 0h28v28H0z" fill="#f6f7f8"/><use href="#tableau"/></svg><em></em></div>
  <svg width="15" height="10" viewBox="0 0 15 10"><path d="M1.500 8.500l6-6.500 6 6.500" fill="none" stroke="#fff" stroke-width="1.700"/></svg>
  <div class="lang">ENG<br>IN</div>
  <svg width="20" height="16" viewBox="0 0 20 16"><g fill="none" stroke="#fff" stroke-width="1.500"><path d="M.7 5.500a13 13 0 0 1 18.600 0M3.500 8.500a9 9 0 0 1 13 0M6.300 11.300a5.200 5.200 0 0 1 7.400 0"/></g><circle cx="10" cy="14" r="1.800" fill="#fff"/></svg>
  <svg width="20" height="16" viewBox="0 0 20 16"><path d="M.7 5.500H4L9 1.500v13L4 10.500H.7zM12 5l6.500 6.500M18.500 5L12 11.500" fill="none" stroke="#fff" stroke-width="1.300"/></svg>
  <svg width="20" height="17" viewBox="0 0 20 17"><path d="M11 4h4.500q2 0 2 2v7q0 2.500-2 2.500H4" fill="none" stroke="#fff" stroke-width="1.500"/><path d="M18 7.500h2v4h-2z" fill="#fff"/><path d="M5.500 0L8 3.500v5.500l-3 5H1L0 10l1-5h1.500zM9.500 13l1-6 4.500-2-1 6.500-2.500 2z" fill="#fff"/></svg>
  <div class="clock">09:22<br>23-09-2024</div>
  <svg width="17" height="20" viewBox="0 0 17 20"><path d="M8.500 1c4 0 6.300 2.800 6.300 6.300v4.200l2 3.500v1H.2v-1l2-3.500V7.300C2.200 3.800 4.500 1 8.500 1zM5.500 17h6q-1 2.300-3 2.300T5.500 17z" fill="#9eeaff"/></svg>
</footer>
</body>
</html>
```
FILE: styles.css
```css
* { box-sizing: border-box; }
body {
  margin: 0; width: 1920px; height: 1080px; overflow: hidden; position: relative;
  display: flex; flex-direction: column; background: #f5f5f5; color: #333;
  font: 400 15px/1.2 Roboto, "Liberation Sans", sans-serif;
}
svg { display: block; flex: none; }
i, em { font-style: normal; }
.defs { position: absolute; }
.k, .k15, .k2 { fill: none; stroke: #666; stroke-width: 1.1; }
.k15 { stroke-width: 1.4; }
.k2 { stroke-width: 2; }
.k15.d { stroke: #444; }
.off .k, .off .k15, .off .k2 { stroke: #b8b8b8; }

.titlebar, .menubar, .taskbar { font-family: "Open Sans", "Noto Sans", sans-serif; }
.titlebar { height: 29px; background: #f3f3f3; display: flex; align-items: center; padding: 1px 25px 0 3px; color: #111; font-size: 14px; }
.title { margin-left: 7px; letter-spacing: .07px; }
.winbtns { margin-left: auto; display: flex; align-items: center; gap: 45px; }
.menubar { height: 25px; background: #fff; display: flex; align-items: center; gap: 16.4px; padding: 2px 8px 0; color: #111; font-size: 14px; }
.menubar u { text-underline-offset: 2px; text-decoration-thickness: 1px; }

.toolbar {
  height: 52px; flex: none; display: grid; align-items: center; padding-left: 18px;
  grid-template-columns: 38px 17px 39px 37px 30px 20px 39px 37px 30px 18px 31px 18px 16px 30px 19px 38px 30px 19px 15px 40px 39px 38px 18px 26px 19px 30px 22px 37px 41px 144px 15px 29px 21px 40px 17px 640px 32px;
  border-bottom: 1px solid #d2d2d2; color: #666;
}
.sep { width: 1px; height: 35px; background: #cfcfcf; }
.offc { color: #b8b8b8; }
.fit { width: 127px; height: 28px; border: 1px solid #c8c8c8; border-radius: 2px; display: flex; align-items: center; padding-left: 8px; font-size: 17.5px; font-weight: 300; color: #333; letter-spacing: .3px; background: #f9f9f9; }
.fit b, .mtype b { margin-left: auto; height: 100%; width: 22px; border-left: 1px solid #ddd; display: flex; align-items: center; justify-content: center; color: #555; }

.work { height: 851px; flex: none; display: flex; }
.side { width: 262px; background: #fafafa; border-right: 1px solid #d2d2d2; }
.tabs { height: 31px; display: flex; align-items: stretch; font-size: 17.2px; color: #222; }
.tabs svg { margin: 10px 0 0 61px; }
.tab-data { width: 99px; border-right: 1px solid #d2d2d2; border-bottom: 1px solid #d2d2d2; padding: 6px 0 0 22px; font-weight: 300; color: #111; letter-spacing: .1px; }
.tab-an { width: 87px; padding: 5px 0 0 14px; font-weight: 700; color: #000; font-size: 17px; letter-spacing: .5px; white-space: nowrap; }
.side h3 { margin: 0; height: 47px; padding: 13px 0 0 22px; font-size: 17px; line-height: 22px; font-weight: 600; color: #333; letter-spacing: .6px; }
.side ul { list-style: none; margin: 0 0 10px; padding: 0; }
.side li { height: 25px; display: flex; align-items: center; gap: 12px; padding-left: 23px; color: #000; font-weight: 300; letter-spacing: .27px; font-size: 15px; }
.side li.ci { letter-spacing: .55px; }
.side li svg { color: #666; }
.side li.dis { color: #999; }
.side li.dis svg { color: #999; }

.cards { width: 206px; padding: 0 0 0 6px; display: flex; flex-direction: column; gap: 6px; }
.card { width: 194px; border: 1px solid #d2d2d2; background: #fafafa; padding: 9px 7px 0; font-weight: 300; letter-spacing: .05px; color: #111; font-size: 15.2px; line-height: 18px; }
.pages { height: 69px; border-top: 0; }
.filters { height: 92px; }
.marks { height: 255px; }
.mtype { margin-top: 15px; height: 24px; width: 178px; border: 1px solid #c8c8c8; border-radius: 2px; display: flex; align-items: center; padding-left: 12px; gap: 6px; font-size: 13.6px; color: #222; }
.mgrid { margin-top: 7px; display: grid; grid-template-columns: 54px 56px 54px; gap: 7px; }
.mgrid div { height: 52px; border: 1px solid #d2d2d2; background: #fdfdfd; display: flex; flex-direction: column; align-items: center; padding-top: 7px; gap: 6px; font-size: 12.4px; line-height: 16px; font-weight: 400; letter-spacing: .1px; color: #333; }

.canvas { flex: 1; padding-right: 6px; display: flex; flex-direction: column; gap: 6px; }
.shelf { height: 32px; flex: none; background: #fafafa; border: 1px solid #d2d2d2; display: flex; align-items: center; }
.shelf:first-child { border-top: 0; height: 31px; }
.sh-name { width: 159px; height: 100%; border-right: 1px solid #d2d2d2; display: flex; align-items: center; gap: 8px; padding: 2px 0 0 7px; font-weight: 300; color: #111; letter-spacing: .2px; font-size: 15.2px; }
.sh-name svg { margin-top: -4px; }
.pill { display: flex; align-items: center; height: 24px; border-radius: 12px; color: #fff; padding: 1px 0 0 13px; letter-spacing: .2px; }
.age { width: 178px; margin-left: 2px; background: #00b180; letter-spacing: .4px; }
.view { height: 770px; background: #fff; border: 1px solid #b0b0b0; }
.vtitle { font-size: 26px; font-weight: 300; fill: #222; letter-spacing: .45px; }
.ax { font-size: 15.5px; font-weight: 300; fill: #555; }
.axt { font-size: 15px; fill: #333; letter-spacing: .3px; }
.gridl { fill: none; stroke: #f2f2f2; }

.showme { position: absolute; left: 1661px; top: 60px; width: 255px; filter: drop-shadow(2px 2px 1px rgba(0,0,0,.3)); }
.sm-tab { position: relative; z-index: 1; height: 46px; width: 130px; margin-left: auto; border: 1px solid #d8d8d8; border-bottom: 0; background: #fafafa; display: flex; align-items: center; gap: 7px; padding: 0 0 7px 13px; font-size: 17.3px; font-weight: 300; color: #000; }
.sm-body { height: 682px; margin-top: -1px; background: #fafafa; border: 1px solid #dcdcdc; padding: 17px 0 0 16px; color: #000; font-size: 15.2px; font-weight: 300; }
.thumbs { display: grid; grid-template-columns: repeat(3, 69px); gap: 5px 6px; }
.thumbs > svg { width: 69px; height: 52px; background: #fff; outline: 1px solid #dcdcdc; outline-offset: -1px; }
.thumbs > svg.sel { outline: 2px solid #e0673a; outline-offset: -2px; }
.thumbs .tt { font-size: 17px; fill: #dadada; font-weight: 400; }
.ln { fill: none; stroke-width: 4; }
.sm-body p { margin: 0; display: flex; align-items: center; white-space: pre; letter-spacing: .28px; }
.sm-for { height: 22px; padding: 0 0 0 2px; }
.sm-body p.sm-for { margin-top: 21px; }
.sm-body p.sm-date { height: 22px; padding-left: 3px; margin-top: 8px; }
.sm-date svg { margin: -5px 0 0 4px; }
.sm-body p.sm-dim { height: 24px; margin-top: 1px; padding-left: 3px; gap: 3px; }
.sm-body p.sm-mea { height: 24px; margin-top: 10px; padding-left: 2px; gap: 5px; }
.sm-dim span:first-child, .sm-mea span:first-child { padding-top: 4px; }
.dim { width: 113px; background: #4996b2; font-weight: 400; }
.mea { width: 98px; background: #00b180; font-weight: 400; }
.sm-for b { font-weight: 700; }

.sheets { height: 37px; flex: none; background: #e6e6e6; border-top: 1px solid #cacaca; display: flex; }
.sheets span { border-right: 1px solid #cacaca; display: flex; align-items: center; }
.ds { width: 163px; padding: 2px 0 0 10px; gap: 5px; color: #555; font-weight: 300; font-size: 15.5px; letter-spacing: .15px; }
.ds svg { margin-top: -2px; }
.cur { width: 72px; background: #fafafa; justify-content: center; font-weight: 700; color: #555; font-size: 15.3px; letter-spacing: .3px; }
.add { width: 32px; justify-content: center; padding-left: 1px; }

.status { height: 26px; flex: none; background: #ebebeb; border-top: 1px solid #cfcfcf; display: flex; align-items: center; font-size: 13.5px; font-weight: 300; color: #000; }
.st-a { width: 73px; padding: 1px 0 0 3px; letter-spacing: .1px; }
.st-b { width: 1428px; padding-top: 1px; letter-spacing: .05px; }
.status i { height: 100%; border-left: 1px solid #cacaca; }
.c1 { width: 157px; }
.c2 { width: 32px; }
.c3 { width: 57px; }
.nav, .modes { height: 100%; border-left: 1px solid #cacaca; display: flex; align-items: center; padding-bottom: 1px; }
.nav { width: 71px; padding-left: 8px; }
.modes { gap: 11px; padding-left: 8px; }

.taskbar {
  height: 60px; flex: none; background: #1c1c1c; color: #fff; display: grid; align-items: center;
  grid-template-columns: 585px 46px 290px 55px 55px 55px 55px 57px 53px 44px 300px 36px 57px 30px 30px 29px 98px 1fr;
  font-size: 14.5px; line-height: 20px;
}
.news { display: flex; align-items: center; padding-left: 26px; gap: 8px; }
.n2 { color: #c4c4c4; }
.search { width: 275px; height: 40px; border-radius: 20px; background: #3c3c3c; border: 1px solid #525252; display: flex; align-items: center; padding-left: 14px; font-size: 16px; color: #ccc; }
.search span { margin: 1px 0 0 10px; width: 163px; }
.app { width: 26px; height: 50px; display: flex; flex-direction: column; align-items: center; justify-content: center; position: relative; }
.app.word { width: 29px; }
.app em { position: absolute; bottom: 1px; width: 8px; height: 4px; border-radius: 2px; background: #9a9a9a; }
.app.on { width: 50px; background: #2b2b2b; border: 1px solid #363636; border-radius: 5px; padding-bottom: 2px; }
.app.on em { width: 20px; bottom: 0; background: #4cc2ff; }
.w { font: 700 12px "Open Sans", sans-serif; fill: #fff; }
.lang { width: 40px; text-align: center; font-size: 14px; margin-left: -1px; }
.clock { width: 87px; text-align: right; font-size: 14.7px; }
```
